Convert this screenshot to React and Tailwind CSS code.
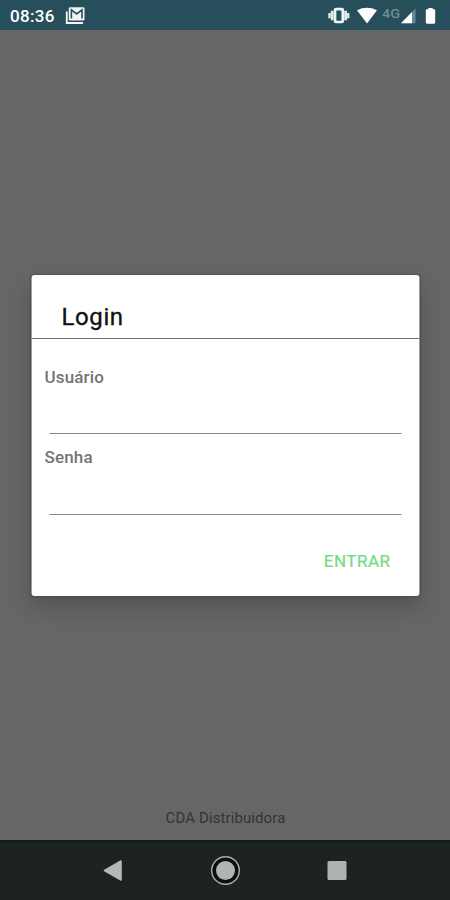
function StatusBar() {
  return (
    <header className="flex h-[30px] shrink-0 items-center bg-[#264e5b] pl-[10px] text-white">
      <span className="w-[55px] whitespace-nowrap text-[17px] font-medium leading-[30px] tracking-[0.3px] pt-[2px]">08:36</span>
      <svg className="h-[30px] w-[24px]" viewBox="0 0 24 30" fill="none">
        <path d="M1.8 11.5V23H18" stroke="#f1f5f5" strokeWidth="1.9" />
        <rect x="3.8" y="7.2" width="15.7" height="13.4" rx="1.4" fill="#f1f5f5" />
        <path d="M6.4 18.5V9.8L11.7 14L17 9.8V18.5" stroke="#264e5b" strokeWidth="1.6" />
      </svg>
      <svg className="ml-auto h-[30px] w-[130px]" viewBox="320 0 130 30" fill="none">
        <rect x="335" y="9.2" width="7.8" height="12.8" rx="1" stroke="#eef3f4" strokeWidth="2.7" />
        <path d="M332.2 10.8V20.2M345.6 10.8V20.2" stroke="#dfe8ea" strokeWidth="2.8" />
        <path d="M329.5 13V18.2M348.2 13V18.2" stroke="#dfe8ea" strokeWidth="2.4" />
        <path d="M357 10.2Q367 5.4 377 10.2L367 23.6Z" fill="#fff" />
        <text x="382" y="17.5" fill="#6d8d97" fontFamily="Roboto, sans-serif" fontSize="12.5" fontWeight="500" textLength="18" lengthAdjust="spacingAndGlyphs">4G</text>
        <path d="M415.5 8.6V23.2H401Z" fill="#6b8790" />
        <path d="M412 12.1V23.2H401Z" fill="#fff" />
        <path d="M428.3 9.2V8H432.7V9.2H434.3Q435.2 9.2 435.2 10.1V22.6Q435.2 23.7 434.1 23.7H426.9Q425.8 23.7 425.8 22.6V10.1Q425.8 9.2 426.7 9.2Z" fill="#fff" />
      </svg>
    </header>
  );
}

function Field({ label, className }) {
  return (
    <label className={`flex flex-col ${className}`}>
      <span className="ml-[13px] text-[17px] font-medium leading-[20px] tracking-[0.15px] text-[#747474]">{label}</span>
      <input aria-label={label} className="ml-[18px] h-[47px] w-[352px] border-b border-[#868686] bg-transparent outline-none" />
    </label>
  );
}

function LoginDialog() {
  return (
    <section className="mx-auto mt-[245px] h-[321px] w-[388px] shrink-0 translate-x-[0.5px] rounded-[3px] bg-white shadow-[0_0_2px_rgba(0,0,0,0.5),0_11px_22px_rgba(0,0,0,0.2)]">
      <h1 className="h-[64px] border-b border-[#707070] pl-[30px] pt-[27px] text-[24px] font-normal leading-[30px] tracking-[0.6px] text-[#111] [-webkit-text-stroke:0.35px_#111]">Login</h1>
      <Field label="Usuário" className="mt-[28px]" />
      <Field label="Senha" className="mt-[13px] pb-px [&>input]:h-[48px]" />
      <div className="mt-[26px] flex justify-end pr-[29px]">
        <button className="h-[40px] text-[17px] font-normal tracking-[0.5px] text-[#71dc7d] [-webkit-text-stroke:0.2px_#71dc7d]">ENTRAR</button>
      </div>
    </section>
  );
}

function NavigationBar() {
  return (
    <nav className="h-[60px] shrink-0 border-t-2 border-[#151a1a] bg-[#1d2222]">
      <svg className="h-[58px] w-[450px]" viewBox="0 842 450 58" fill="none">
        <path d="M104.5 870.5L121 861V880Z" fill="#b4b8b8" stroke="#b4b8b8" strokeWidth="1.6" strokeLinejoin="round" />
        <circle cx="225.5" cy="870.5" r="13.8" fill="#0b0e0e" stroke="#a8acac" strokeWidth="1.5" />
        <circle cx="225.5" cy="870.5" r="9.5" fill="#b0b4b4" />
        <rect x="327.5" y="861" width="19" height="19" rx="1.5" fill="#aeb2b2" />
      </svg>
    </nav>
  );
}

export default function App() {
  return (
    <main className="flex h-[900px] w-[450px] flex-col overflow-hidden bg-[#666] font-[Roboto,sans-serif]">
      <StatusBar />
      <div className="flex flex-1 flex-col">
        <LoginDialog />
        <p className="mt-auto mb-[12px] pl-[1px] text-center text-[15px] leading-[20px] tracking-[0.1px] text-[#343434]">CDA Distribuidora</p>
      </div>
      <NavigationBar />
    </main>
  );
}
